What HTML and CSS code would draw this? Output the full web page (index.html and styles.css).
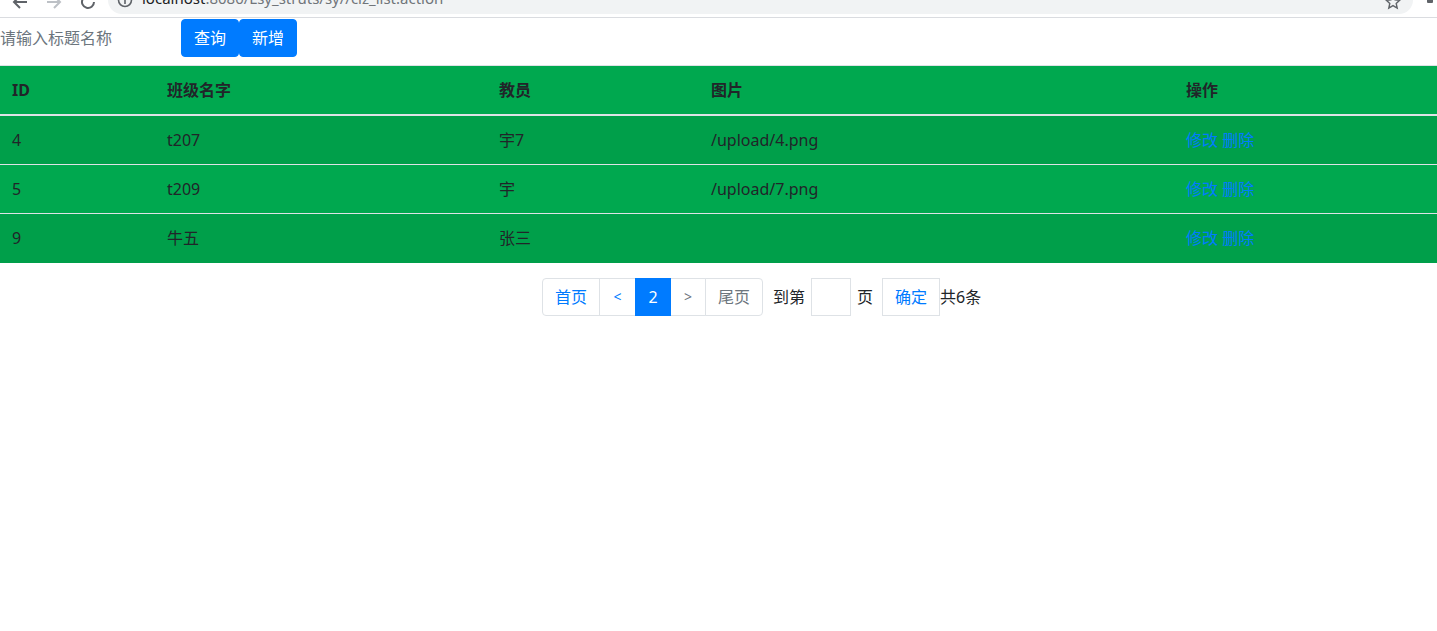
FILE: index.html
```html
<!DOCTYPE html>
<html lang="zh">
<head>
<meta charset="utf-8">
<title>clz_list</title>
<link rel="stylesheet" href="styles.css">
</head>
<body>
<div class="chrome">
  <div class="nav">
    <svg class="nav-icon" width="18" height="18" viewBox="0 0 18 18"><path d="M16 9H3M9 3L3 9l6 6" fill="none" stroke="#5f6368" stroke-width="2"/></svg>
    <svg class="nav-icon" width="18" height="18" viewBox="0 0 18 18"><path d="M2 9h13M9 3l6 6-6 6" fill="none" stroke="#bdc1c6" stroke-width="2"/></svg>
    <svg class="nav-icon" width="18" height="18" viewBox="0 0 18 18"><path d="M15 9a6 6 0 1 1-2-4.5" fill="none" stroke="#5f6368" stroke-width="2"/><path d="M10 2h5v5z" fill="#5f6368"/></svg>
  </div>
  <div class="omnibox">
    <svg class="info" width="16" height="16" viewBox="0 0 16 16"><circle cx="8" cy="8" r="6.5" fill="none" stroke="#5f6368" stroke-width="1.6"/><path d="M8 7v5" stroke="#5f6368" stroke-width="1.6"/></svg>
    <span class="url"><span class="host">localhost</span>:8080/Lsy_struts/sy//clz_list.action</span>
    <svg class="star" width="16" height="16" viewBox="0 0 16 16"><path d="M8 1.5l2 4.3 4.6.5-3.4 3.1 1 4.6L8 11.6 3.8 14l1-4.6L1.4 6.3 6 5.8z" fill="none" stroke="#5f6368" stroke-width="1.4"/></svg>
  </div>
  <svg class="ext" width="6" height="8" viewBox="0 0 6 8"><rect x="0" y="0" width="6" height="6" rx="1" fill="#5f6368"/></svg>
</div>

<form class="search">
  <input class="search-input" type="text" placeholder="请输入标题名称">
  <button type="button" class="btn">查询</button>
  <button type="button" class="btn">新增</button>
</form>

<table class="grid">
  <thead>
    <tr>
      <th class="c-id">ID</th>
      <th class="c-name">班级名字</th>
      <th class="c-teacher">教员</th>
      <th class="c-pic">图片</th>
      <th class="c-op">操作</th>
    </tr>
  </thead>
  <tbody>
    <tr class="odd">
      <td>4</td><td>t207</td><td>宇7</td><td>/upload/4.png</td>
      <td><a href="#">修改</a> <a href="#">删除</a></td>
    </tr>
    <tr>
      <td>5</td><td>t209</td><td>宇</td><td>/upload/7.png</td>
      <td><a href="#">修改</a> <a href="#">删除</a></td>
    </tr>
    <tr class="odd">
      <td>9</td><td>牛五</td><td>张三</td><td></td>
      <td><a href="#">修改</a> <a href="#">删除</a></td>
    </tr>
  </tbody>
</table>

<div class="pager">
  <ul class="pagination">
    <li class="page-link first">首页</li>
    <li class="page-link arrow">&lt;</li>
    <li class="page-link active">2</li>
    <li class="page-link arrow next disabled">&gt;</li>
    <li class="page-link disabled last">尾页</li>
  </ul>
  <span class="goto">到第</span>
  <input class="page-input" type="text">
  <span class="page-word">页</span>
  <button type="button" class="confirm">确定</button>
  <span class="total">共6条</span>
</div>
</body>
</html>
```

FILE: styles.css
```css
* { box-sizing: border-box; }

body {
  margin: 0;
  font-family: "Noto Sans", "Noto Sans CJK SC", sans-serif;
  font-size: 16px;
  line-height: 24px;
  color: #212529;
  background: #fff;
}

/* cropped browser chrome */
.chrome {
  height: 18px;
  border-bottom: 1px solid #dadce0;
  display: flex;
  align-items: flex-end;
  overflow: hidden;
  background: #fff;
}
.nav {
  display: flex;
  gap: 16px;
  padding-left: 11px;
  width: 108px;
  margin-bottom: 6px;
}
.omnibox {
  width: 1305px;
  height: 28px;
  margin-bottom: 3px;
  background: #f1f3f4;
  border-radius: 14px;
  display: flex;
  align-items: center;
  padding: 0 12px 0 9px;
}
.info { margin-right: 9px; }
.url {
  flex: 1;
  font-family: "Noto Sans", sans-serif;
  font-size: 15px;
  line-height: 20px;
  color: #70757a;
  position: relative;
  top: -2px;
}
.host { color: #202124; }
.star { margin-top: 4px; }
.ext { margin-left: 14px; margin-bottom: 12px; }

/* search */
.search {
  display: flex;
  align-items: center;
  margin: 1px 0 8px;
}
.search-input {
  width: 181px;
  height: 38px;
  border: none;
  padding: 0 1px 0 0;
  font: inherit;
  font-size: 16px;
  outline: none;
}
.search-input::placeholder { color: #6c757d; }
.btn {
  height: 38px;
  padding: 6px 12px;
  border: 1px solid #007bff;
  border-radius: 4px;
  background: #007bff;
  color: #fff;
  font: inherit;
  font-size: 16px;
}

/* table */
.grid {
  width: 100%;
  border-collapse: collapse;
  table-layout: fixed;
}
.grid th, .grid td {
  padding: 12px;
  text-align: left;
  vertical-align: top;
  border-top: 1px solid #dee2e6;
  background: #00a84f;
  height: 49px;
}
.grid th {
  font-weight: bold;
  border-bottom: 2px solid #dee2e6;
}
.grid tr.odd td { background: #009f4a; }
.grid a { color: #007bff; text-decoration: none; }
.c-id { width: 155px; }
.c-name { width: 332px; }
.c-teacher { width: 212px; }
.c-pic { width: 475px; }
.c-op { width: auto; }

/* pager */
.pager {
  display: flex;
  align-items: center;
  padding-left: 542px;
  margin-top: 15px;
}
.pagination {
  display: flex;
  list-style: none;
  margin: 0;
  padding: 0;
}
.page-link {
  height: 38px;
  padding: 6px 12px;
  border: 1px solid #dee2e6;
  margin-left: -1px;
  color: #007bff;
  background: #fff;
  text-align: center;
}
.page-link.arrow { width: 37px; font-size: 14px; padding: 6px 0; }
.page-link.arrow.next { width: 36px; }
.page-link.first { margin-left: 0; border-radius: 4px 0 0 4px; }
.page-link.last { border-radius: 0 4px 4px 0; }
.page-link.active { width: 36px; padding: 6px 0; background: #007bff; border-color: #007bff; color: #fff; position: relative; }
.page-link.disabled { color: #6c757d; }
.goto { margin-left: 10px; }
.page-input {
  width: 40px;
  height: 38px;
  margin-left: 6px;
  border: 1px solid #dee2e6;
  font: inherit;
}
.page-word { margin-left: 6px; }
.confirm {
  height: 38px;
  margin-left: 9px;
  padding: 6px 12px;
  border: 1px solid #dee2e6;
  background: #fff;
  color: #007bff;
  font: inherit;
  font-size: 16px;
}
```
